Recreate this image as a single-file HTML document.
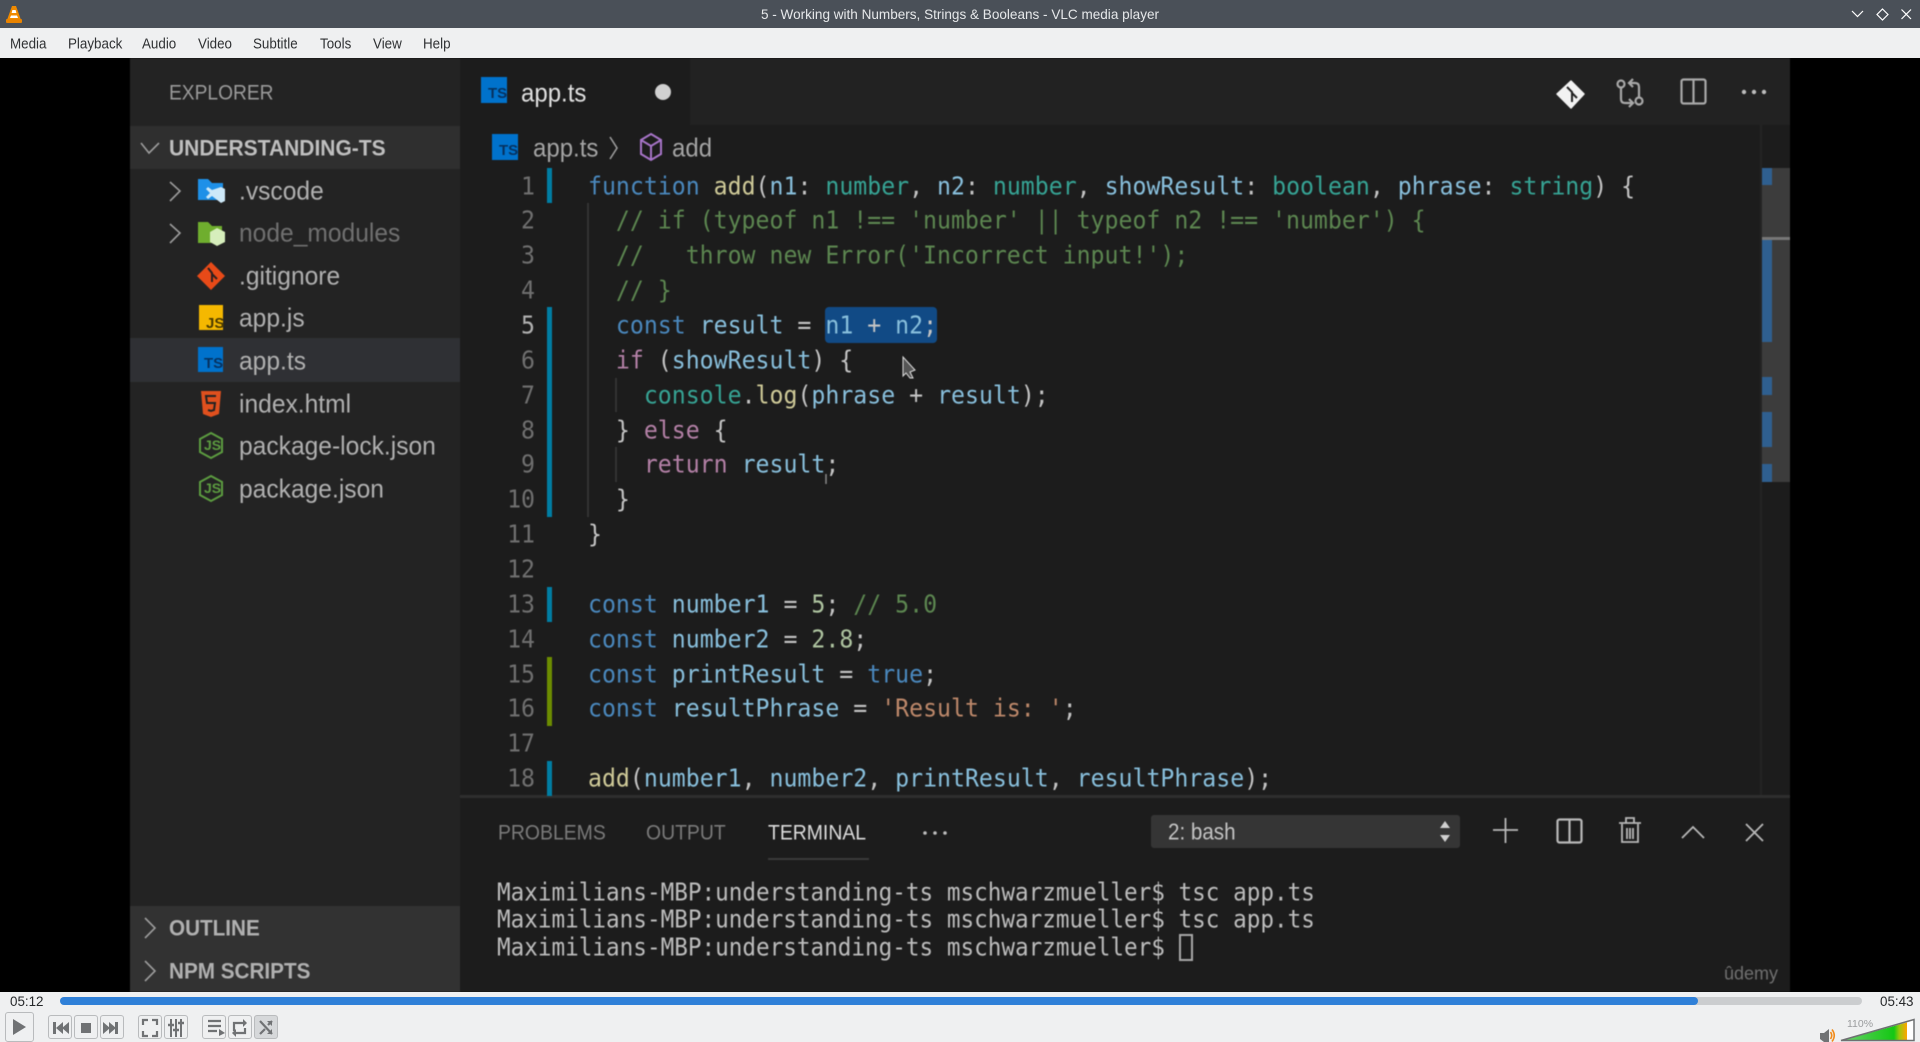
<!DOCTYPE html>
<html><head><meta charset="utf-8"><title>VLC</title>
<style>
*{margin:0;padding:0;box-sizing:border-box}
html,body{width:1920px;height:1042px;overflow:hidden;background:#000;font-family:"Liberation Sans",sans-serif}
.a{position:absolute}
.t{position:absolute;white-space:pre}
#title{left:0;top:0;width:1920px;height:28px;background:#4a5058}
#menu{left:0;top:28px;width:1920px;height:30px;background:#eff0f1}
.m{top:29px;line-height:30px;font-size:13.4px;color:#2f3133;transform:scaleY(1.08)}
#video{left:0;top:58px;width:1920px;height:934px;background:#000;overflow:hidden}
#v{left:0;top:-58px;width:1920px;height:1042px;filter:blur(.6px)}
.f{font-size:24.6px;color:#b0b0b0;line-height:40px;left:239px;transform:scaleY(1.06)}
.c{font-family:"DejaVu Sans Mono",monospace;font-size:23.2px;line-height:35px;left:588px;color:#c4c4c4;transform:scaleY(1.08)}
.n{font-family:"DejaVu Sans Mono",monospace;font-size:23.2px;line-height:35px;left:480px;width:55px;text-align:right;color:#6f6f6f;transform:scaleY(1.08)}
.k{color:#4a88bd}.fn{color:#cfca98}.v{color:#88bfdc}.ty{color:#36a394}.cm{color:#5c8650}.s{color:#bd886a}.nu{color:#aec4a0}.p{color:#b380a6}
.tm{font-family:"DejaVu Sans Mono",monospace;font-size:22.65px;line-height:27px;left:497px;color:#bcbcbc;transform:scaleY(1.1)}
.b{position:absolute;top:1015px;width:24px;height:24px;border:1px solid #b9bbbd;border-radius:3px;background:#eff0f1}
.pt{line-height:40px;font-size:19.4px;top:813px;transform:scaleY(1.1)}
</style></head><body>
<div class="a" id="title"></div>
<svg class="a" style="left:5px;top:5px" width="18" height="19" viewBox="0 0 18 19"><path d="M9 1 L11 1 L16 15 L2 15 L7 1Z" fill="#f08a00"/><path d="M7.4 5 H10.6 L11.4 8 H6.6Z" fill="#fff"/><path d="M6 10.5 H12 L13 13 H5Z" fill="#fff"/><rect x="1" y="14" width="16" height="4" rx="1" fill="#e98300"/></svg>
<div class="t" style="left:760px;width:400px;top:1px;line-height:28px;text-align:center;font-size:13.55px;color:#e6e8ea">5 - Working with Numbers, Strings &amp; Booleans - VLC media player</div>
<svg class="a" style="left:1848px;top:4px" width="68" height="20" fill="none" stroke="#fff" stroke-width="1.2"><path d="M4 7 L9.5 12.5 L15 7"/><path d="M34.5 5 L40 10.5 L34.5 16 L29 10.5Z"/><path d="M53.5 5.5 L63 15 M63 5.5 L53.5 15"/></svg>

<div class="a" id="menu"></div>
<div class="t m" style="left:10px">Media</div>
<div class="t m" style="left:68px">Playback</div>
<div class="t m" style="left:142px">Audio</div>
<div class="t m" style="left:198px">Video</div>
<div class="t m" style="left:253px">Subtitle</div>
<div class="t m" style="left:320px">Tools</div>
<div class="t m" style="left:373px">View</div>
<div class="t m" style="left:423px">Help</div>

<div class="a" id="video"><div class="a" id="v">
<div class="a" style="left:130px;top:58px;width:330px;height:934px;background:#232323"></div>
<div class="a" style="left:460px;top:58px;width:1330px;height:934px;background:#1c1c1c"></div>
<div class="a" style="left:690px;top:58px;width:1100px;height:67px;background:#222"></div>
<div class="a" style="left:130px;top:126px;width:330px;height:43px;background:#2f2f2f"></div>
<div class="a" style="left:130px;top:338px;width:330px;height:44px;background:#2f3034"></div>
<div class="a" style="left:130px;top:906px;width:330px;height:86px;background:#323232"></div>
<div class="a" style="left:460px;top:795px;width:1330px;height:3px;background:#2e2e2e"></div>
<div class="a" style="left:1760px;top:125px;width:2px;height:670px;background:#242424"></div>

<div class="t" style="left:169px;top:78px;line-height:32px;font-size:19.2px;color:#9a9a9a;transform:scaleY(1.12)">EXPLORER</div>
<div class="t" style="left:169px;top:129px;line-height:40px;font-size:21px;font-weight:bold;color:#bfbfbf;transform:scaleY(1.06)">UNDERSTANDING-TS</div>
<div class="t f" style="top:172px">.vscode</div>
<div class="t f" style="top:214px;color:#707070">node_modules</div>
<div class="t f" style="top:257px">.gitignore</div>
<div class="t f" style="top:299px">app.js</div>
<div class="t f" style="top:342px">app.ts</div>
<div class="t f" style="top:385px">index.html</div>
<div class="t f" style="top:427px">package-lock.json</div>
<div class="t f" style="top:470px">package.json</div>
<div class="t" style="left:169px;top:909px;line-height:40px;font-size:20.7px;font-weight:bold;color:#b0b0b0;transform:scaleY(1.06)">OUTLINE</div>
<div class="t" style="left:169px;top:952px;line-height:40px;font-size:20.7px;font-weight:bold;color:#b0b0b0;transform:scaleY(1.06)">NPM SCRIPTS</div>

<svg class="a" style="left:0;top:0" width="1920" height="1042" fill="none">
<g stroke="#9c9c9c" stroke-width="1.6">
<path d="M141 143 L149 153 L159 143"/>
<path d="M170 182 L180 191 L170 201"/><path d="M170 224 L180 233 L170 243"/>
<path d="M145 918 L155 928 L145 938"/><path d="M145 961 L155 971 L145 981"/>
<path d="M610 137 L617 148 L610 159"/>
</g>
<path d="M198 179 H208 L212 183 H223 V200 H198Z" fill="#1e90e8"/>
<path d="M221 187 L225 189 V201 L221 203 L212 196 L208 199 L206 197 L210 193 L206 189 L208 187 L212 190Z" fill="#cde8f8"/>
<path d="M198 222 H208 L212 226 H222 V243 H198Z" fill="#6fae2e"/>
<path d="M217 228 L225 232 V242 L217 246 L210 242 V232Z" fill="#d6eebc"/>
<path d="M211 262 L225 276 L211 290 L197 276Z" fill="#e84a18"/>
<path d="M208 268 L212 273 V282 M212 274 L217 279" stroke="#2a2020" stroke-width="2"/>
<rect x="199" y="305" width="24" height="25" fill="#f5b800"/>
<rect x="198" y="347" width="25" height="25" fill="#0072cc"/>
<path d="M201 391 H221 L219 414 L211 417 L203 414Z" fill="#e0501e"/>
<path d="M216 396 H206 L207 403 H215 L214 410 L211 411 L208 410" stroke="#222" stroke-width="2"/>
<g stroke="#5c9c40" stroke-width="2"><path d="M211 433 L222 439 V452 L211 458 L200 452 V439Z"/><path d="M211 476 L222 482 V495 L211 501 L200 495 V482Z"/></g>
<rect x="481" y="77" width="26" height="26" fill="#0072cc"/>
<rect x="492" y="134" width="26" height="26" fill="#0072cc"/>
<circle cx="663" cy="92" r="8" fill="#d0d0d0"/>
<path d="M651 134 L661 140 V154 L651 160 L641 154 V140Z M641 140 L651 146 L661 140 M651 146 V160" stroke="#a774c8" stroke-width="2"/>
<path d="M1571 81 L1584 94 L1571 108 L1557 94Z" fill="#f2f2f2" stroke="#f2f2f2" stroke-width="1.5" stroke-linejoin="round"/>
<path d="M1567 87 L1572 92 V102 M1572 93 L1577 98" stroke="#222" stroke-width="2"/>
<g stroke="#a8a8a8" stroke-width="2.2">
<circle cx="1621" cy="84" r="3.5"/><circle cx="1639" cy="101" r="3.5"/>
<path d="M1621 88 V99 Q1621 103 1625 103 H1632 M1629 99 L1633 103 L1629 107"/>
<path d="M1639 97 V87 Q1639 83 1635 83 H1630 M1633 79 L1629 83 L1633 87"/>
<rect x="1681.5" y="79.5" width="24" height="24" rx="2"/><path d="M1693.5 80 V103"/>
</g>
<g fill="#bcbcbc"><circle cx="1744" cy="92" r="2.2"/><circle cx="1754" cy="92" r="2.2"/><circle cx="1764" cy="92" r="2.2"/></g>
<g fill="#bdbdbd"><circle cx="925" cy="833" r="1.8"/><circle cx="935" cy="833" r="1.8"/><circle cx="945" cy="833" r="1.8"/></g>
<rect x="1151" y="815" width="309" height="33" rx="3" fill="#353535"/>
<path d="M1445 821 L1450 828 H1440Z M1445 842 L1450 835 H1440Z" fill="#d0d0d0"/>
<g stroke="#b8b8b8" stroke-width="2.2">
<path d="M1493 830 H1518 M1505.5 818 V843" stroke-width="1.8"/>
<rect x="1557.5" y="819.5" width="24" height="23" rx="2"/><path d="M1569.5 820 V842"/>
<path d="M1622 824 V842 H1638 V824 M1619 823 H1641 M1626 823 V818 H1634 V823 M1627 828 V839 M1630 828 V839 M1633 828 V839" stroke-width="1.8"/>
<path d="M1682 838 L1693 827 L1704 838" stroke-width="1.8"/>
<path d="M1746 824 L1763 841 M1763 824 L1746 841" stroke-width="1.8"/>
</g>
<rect x="1180" y="935" width="12" height="25" stroke="#a8a8a8" stroke-width="2"/>
<rect x="1762" y="168" width="28" height="314" fill="#3c3c3c"/>
<g fill="#2f5f8f"><rect x="1762" y="168" width="10" height="17"/><rect x="1762" y="240" width="10" height="102"/><rect x="1762" y="377" width="10" height="18"/><rect x="1762" y="412" width="10" height="35"/><rect x="1762" y="464" width="10" height="18"/></g>
<rect x="1762" y="237" width="28" height="3" fill="#777"/>
<g stroke="#3a3a3a" stroke-width="1.5"><path d="M588 203 V517 M616 378 V412 M616 447 V482"/></g>
<g fill="#007da3"><rect x="547" y="168" width="5" height="35"/><rect x="547" y="307" width="5" height="210"/><rect x="547" y="587" width="5" height="35"/><rect x="547" y="761" width="5" height="35"/></g>
<rect x="547" y="657" width="5" height="69" fill="#6c8c00"/>
<rect x="825" y="307" width="112" height="36" rx="4" fill="#114a85"/>
<path d="M903 357 L915 370 L910 372 L913 378 L910 378 L906 373 L903 376Z" fill="#555" stroke="#ddd"/>
<path d="M826 474 V484" stroke="#888" stroke-width="1.5"/>
</svg>
<div class="t" style="left:206px;top:316px;line-height:16px;font-size:15px;font-weight:bold;color:#4a3a00">JS</div>
<div class="t" style="left:204px;top:356px;line-height:16px;font-size:15px;font-weight:bold;color:#063260">TS</div>
<div class="t" style="left:488px;top:86px;line-height:16px;font-size:15px;font-weight:bold;color:#063260">TS</div>
<div class="t" style="left:499px;top:143px;line-height:16px;font-size:15px;font-weight:bold;color:#063260">TS</div>
<div class="t" style="left:204px;top:437px;line-height:16px;font-size:14px;font-weight:bold;color:#5c9c40">JS</div>
<div class="t" style="left:204px;top:480px;line-height:16px;font-size:14px;font-weight:bold;color:#5c9c40">JS</div>

<div class="t" style="left:521px;top:74px;line-height:40px;font-size:24px;color:#e0e0e0;transform:scaleY(1.06)">app.ts</div>
<div class="t" style="left:533px;top:129px;line-height:40px;font-size:24px;color:#a4a4a4;transform:scaleY(1.06)">app.ts</div>
<div class="t" style="left:672px;top:129px;line-height:40px;font-size:24px;color:#a4a4a4;transform:scaleY(1.06)">add</div>

<div class="t n" style="top:168.5px">1</div><div class="t n" style="top:203.4px">2</div><div class="t n" style="top:238.2px">3</div><div class="t n" style="top:273.1px">4</div><div class="t n" style="top:307.9px;color:#b0b0b0">5</div><div class="t n" style="top:342.8px">6</div><div class="t n" style="top:377.7px">7</div><div class="t n" style="top:412.5px">8</div><div class="t n" style="top:447.4px">9</div><div class="t n" style="top:482.2px">10</div><div class="t n" style="top:517.1px">11</div><div class="t n" style="top:552px">12</div><div class="t n" style="top:586.8px">13</div><div class="t n" style="top:621.7px">14</div><div class="t n" style="top:656.5px">15</div><div class="t n" style="top:691.4px">16</div><div class="t n" style="top:726.3px">17</div><div class="t n" style="top:761.1px">18</div>

<div class="t c" style="top:168.5px"><span class="k">function</span> <span class="fn">add</span>(<span class="v">n1</span>: <span class="ty">number</span>, <span class="v">n2</span>: <span class="ty">number</span>, <span class="v">showResult</span>: <span class="ty">boolean</span>, <span class="v">phrase</span>: <span class="ty">string</span>) {</div>
<div class="t c cm" style="top:203.4px">  // if (typeof n1 !== 'number' || typeof n2 !== 'number') {</div>
<div class="t c cm" style="top:238.2px">  //   throw new Error('Incorrect input!');</div>
<div class="t c cm" style="top:273.1px">  // }</div>
<div class="t c" style="top:307.9px">  <span class="k">const</span> <span class="v">result</span> = <span class="v">n1</span> + <span class="v">n2</span>;</div>
<div class="t c" style="top:342.8px">  <span class="p">if</span> (<span class="v">showResult</span>) {</div>
<div class="t c" style="top:377.7px">    <span class="ty">console</span>.<span class="fn">log</span>(<span class="v">phrase</span> + <span class="v">result</span>);</div>
<div class="t c" style="top:412.5px">  } <span class="p">else</span> {</div>
<div class="t c" style="top:447.4px">    <span class="p">return</span> <span class="v">result</span>;</div>
<div class="t c" style="top:482.2px">  }</div>
<div class="t c" style="top:517.1px">}</div>
<div class="t c" style="top:586.8px"><span class="k">const</span> <span class="v">number1</span> = <span class="nu">5</span>; <span class="cm">// 5.0</span></div>
<div class="t c" style="top:621.7px"><span class="k">const</span> <span class="v">number2</span> = <span class="nu">2.8</span>;</div>
<div class="t c" style="top:656.5px"><span class="k">const</span> <span class="v">printResult</span> = <span class="k">true</span>;</div>
<div class="t c" style="top:691.4px"><span class="k">const</span> <span class="v">resultPhrase</span> = <span class="s">'Result is: '</span>;</div>
<div class="t c" style="top:761.1px"><span class="fn">add</span>(<span class="v">number1</span>, <span class="v">number2</span>, <span class="v">printResult</span>, <span class="v">resultPhrase</span>);</div>

<div class="t pt" style="left:498px;color:#7a7a7a">PROBLEMS</div>
<div class="t pt" style="left:646px;color:#7a7a7a">OUTPUT</div>
<div class="t pt" style="left:768px;color:#dcdcdc">TERMINAL</div>
<div class="a" style="left:768px;top:858px;width:101px;height:2px;background:#3a3a3a"></div>
<div class="t pt" style="left:1168px;font-size:20.6px;color:#c4c4c4">2: bash</div>
<div class="t tm" style="top:879.5px">Maximilians-MBP:understanding-ts mschwarzmueller$ tsc app.ts</div>
<div class="t tm" style="top:907px">Maximilians-MBP:understanding-ts mschwarzmueller$ tsc app.ts</div>
<div class="t tm" style="top:935px">Maximilians-MBP:understanding-ts mschwarzmueller$</div>
<div class="t" style="left:1724px;top:961px;line-height:24px;font-size:18px;color:#707070;transform:scaleY(1.05)">ûdemy</div>
</div></div>

<div class="a" style="left:0;top:992px;width:1920px;height:50px;background:#eff0f1"></div>
<div class="t" style="left:10px;top:994px;line-height:16px;font-size:13.4px;color:#26282a">05:12</div>
<div class="t" style="left:1880px;top:994px;line-height:16px;font-size:13.4px;color:#26282a">05:43</div>
<div class="a" style="left:60px;top:997px;width:1802px;height:8px;border-radius:4px;background:#cbcdcf"></div>
<div class="a" style="left:60px;top:997px;width:1638px;height:8px;border-radius:4px;background:#2f80d8"></div>
<div class="a" style="left:5px;top:1012px;width:29px;height:30px;border:1px solid #b9bbbd;border-radius:3px"></div>
<div class="b" style="left:48px"></div><div class="b" style="left:74px"></div><div class="b" style="left:100px"></div>
<div class="b" style="left:138px"></div><div class="b" style="left:164px"></div>
<div class="b" style="left:202px"></div><div class="b" style="left:228px"></div><div class="b" style="left:254px;background:#d6d8da"></div>
<svg class="a" style="left:0;top:992px" width="300" height="50" fill="none">
<path d="M13 27 L26 35 L13 43Z" fill="#707274"/>
<g fill="#707274">
<rect x="53" y="30" width="3" height="12"/><path d="M63 30 V42 L56 36Z M69 30 V42 L62 36Z"/>
<rect x="81" y="31" width="10" height="10"/>
<rect x="115" y="30" width="3" height="12"/><path d="M103 30 V42 L110 36Z M109 30 V42 L116 36Z"/>
</g>
<g stroke="#707274" stroke-width="2.2">
<path d="M143 33 V28 H148 M152 28 H157 V33 M157 39 V44 H152 M148 44 H143 V39"/>
<path d="M171 27 V45 M176 27 V45 M181 27 V45" stroke-width="2"/>
<path d="M168 33 H174 M173 38 H179 M178 31 H184" stroke-width="2.5"/>
<path d="M208 29 H221 M208 34 H221 M208 39 H217"/>
<path d="M234 33 V31 H243 M245 36 V41 H236 M234 39 V33"/>
<path d="M260 29 L272 42 M260 42 L265 37 M268 33 L272 29"/>
</g>
<path d="M219 37 L225 41 L219 44Z M243 27 L247 31 L243 35Z M236 37 L232 41 L236 45Z M272 29 V34 L267 29Z M272 42 V37 L267 42Z" fill="#707274"/>
</svg>
<svg class="a" style="left:1816px;top:1016px" width="104" height="26" fill="none">
<path d="M4 17 H8 L13 13 V26 H8 L4 23Z" fill="#707274"/>
<path d="M14.5 16 Q17 19.5 14.5 23 M16 13.5 Q20.5 19.5 16 25.500" stroke="#f08a1a" stroke-width="1.6"/>
<defs><linearGradient id="g" x1="0" x2="1"><stop offset="0" stop-color="#6ed470"/><stop offset=".4" stop-color="#3ecb3e"/><stop offset=".8" stop-color="#14c814"/><stop offset=".88" stop-color="#9ac80c"/><stop offset="1" stop-color="#ffa500"/></linearGradient></defs>
<path d="M26 24.5 L91 6.5 V24.5Z" fill="url(#g)"/>
<path d="M91 6 L98 4 V24.5 H91Z" fill="#fff"/>
<path d="M25 24.5 L98 3.5 V24.5Z" stroke="#6e7072" stroke-width="1.5"/>
</svg>
<div class="t" style="left:1847px;top:1017px;line-height:14px;font-size:10.5px;color:#9a9c9e">110%</div>
</body></html>
